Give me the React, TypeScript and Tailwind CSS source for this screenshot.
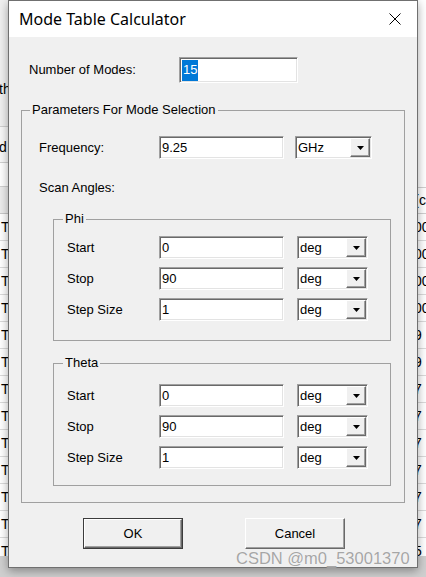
import type { ReactNode } from "react";

const UI = "font-['Liberation_Sans',Arial,sans-serif]";

function Sunken({ className = "", children }: { className?: string; children?: ReactNode }) {
  return (
    <div
      className={`flex items-center bg-white border border-t-[#a0a0a0] border-l-[#a0a0a0] border-r-white border-b-white shadow-[inset_1px_1px_0_#696969,inset_-1px_-1px_0_#e3e3e3] ${className}`}
    >
      {children}
    </div>
  );
}

function TextBox({ value, className = "" }: { value: string; className?: string }) {
  return (
    <Sunken className={`h-[23px] ${className}`}>
      <span className="pl-[2px] leading-none">{value}</span>
    </Sunken>
  );
}

function Combo({ value, className = "" }: { value: string; className?: string }) {
  return (
    <Sunken className={`h-[23px] ${className}`}>
      <span className="flex-1 pl-[2px] leading-none">{value}</span>
      <div className="mr-[1px] w-[20px] h-[19px] flex items-center justify-center bg-[#f0f0f0] border border-t-white border-l-white border-r-[#696969] border-b-[#696969] shadow-[inset_-1px_-1px_0_#a0a0a0]">
        <svg width="7" height="4" viewBox="0 0 7 4" aria-hidden="true">
          <path d="M0 0h7L3.5 4z" fill="#000" />
        </svg>
      </div>
    </Sunken>
  );
}

function AngleRow({ label, value }: { label: string; value: string }) {
  return (
    <div className="flex items-center">
      <span className="w-[92px]">{label}</span>
      <TextBox value={value} className="w-[125px]" />
      <Combo value="deg" className="ml-[13px] w-[71px]" />
    </div>
  );
}

const ROWS: [string, string][] = [
  ["Start", "0"],
  ["Stop", "90"],
  ["Step Size", "1"],
];

function AngleGroup({ title, top, inner }: { title: string; top: string; inner: string }) {
  return (
    <fieldset className={`ml-[31px] w-[338px] border border-[#a0a0a0] ${top}`}>
      <legend className="ml-[9px] px-[2px] leading-[16px]">{title}</legend>
      <div className={`flex flex-col gap-[8px] pl-[13px] ${inner}`}>
        {ROWS.map(([l, v]) => (
          <AngleRow key={l} label={l} value={v} />
        ))}
      </div>
    </fieldset>
  );
}

const RIGHT_VALUES = ["00", "00", "00", "00", "9", "9", "7", "7", "7", "7", "7", "7", "5"];

function Background() {
  return (
    <div className={`h-[577px] flex flex-col bg-[#f0f0f0] ${UI} text-[14px] text-black`}>
      <div className="h-[214px] flex">
        <div className="w-[416px] flex flex-col">
          <div className="h-[80px]" />
          <div className="h-[18px] leading-[18px] -ml-[1px]">th</div>
          <div className="h-[29px] border-b border-[#d0d0d0]" />
          <div className="h-[36px] pt-[3px] leading-[34px] bg-[#f8f8f8] border-b border-[#d0d0d0] -ml-[1px]">
            d
          </div>
          <div className="h-[24px] bg-white border-b border-[#d0d0d0]" />
          <div className="flex-1 bg-[#ececec] border-b border-[#c8c8c8]" />
        </div>
        <div className="flex-1 flex flex-col bg-white">
          <div className="h-[188px]" />
          <div className="flex-1 bg-white border-t border-b border-[#d0d0d0] leading-[25px] pl-[1px]">(c</div>
        </div>
      </div>
      <div className="h-[342px] flex flex-col overflow-hidden bg-white">
        {RIGHT_VALUES.map((v, i) => (
          <div key={i} className="h-[27px] shrink-0 flex border-b border-[#dadada] leading-[26px]">
            <div className="w-[416px] pl-[1px]">T</div>
            <div className="w-[10px] -ml-[2px] whitespace-nowrap">{v}</div>
          </div>
        ))}
      </div>
      <div className="flex-1 bg-[#cfcfcf]" />
    </div>
  );
}

export default function App() {
  return (
    <div className="relative w-[426px] h-[577px] overflow-hidden">
      <Background />

      <div className="absolute left-[8px] top-0 w-[410px] h-[568px] flex flex-col border border-[#707070] bg-[#f0f0f0] shadow-[0_3px_9px_rgba(0,0,0,0.35)]">
        <div className="h-[36px] shrink-0 bg-white flex items-center justify-between pl-[10px] pr-[16px]">
          <span className="font-['Noto_Sans',sans-serif] text-[16px] text-black">Mode Table Calculator</span>
          <svg width="12" height="12" viewBox="0 0 12 12" aria-hidden="true">
            <path d="M0.5 0.5L11.5 11.5M11.5 0.5L0.5 11.5" stroke="#000" strokeWidth="1" />
          </svg>
        </div>

        <div className={`flex-1 flex flex-col px-[12px] pt-[20px] ${UI} text-[13px] text-black`}>
          <div className="flex items-center">
            <span className="w-[158px] pl-[8px]">Number of Modes:</span>
            <Sunken className="w-[119px] h-[26px]">
              <span className="ml-[2px] h-[21px] flex items-center bg-[#0078d7] text-white px-[1px]">15</span>
            </Sunken>
          </div>

          <fieldset className="mt-[19px] w-[384px] border border-[#a0a0a0]">
            <legend className="ml-[8px] px-[2px] leading-[16px]">Parameters For Mode Selection</legend>
            <div className="flex flex-col pt-[18px] pb-[16px]">
              <div className="flex items-center pl-[17px]">
                <span className="w-[120px]">Frequency:</span>
                <TextBox value="9.25" className="w-[125px]" />
                <Combo value="GHz" className="ml-[11px] w-[77px]" />
              </div>
              <div className="mt-[21px] pl-[17px] leading-[16px]">Scan Angles:</div>
              <AngleGroup title="Phi" top="mt-[15px]" inner="pt-[9px] pb-[19px]" />
              <AngleGroup title="Theta" top="mt-[14px]" inner="pt-[13px] pb-[16px]" />
            </div>
          </fieldset>

          <div className="mt-[15px] flex pl-[62px] gap-[62px]">
            <div className="w-[100px] h-[31px] border border-[#3c3c3c]">
              <div className="h-full flex items-center justify-center bg-[#f0f0f0] border border-t-white border-l-white border-r-[#696969] border-b-[#696969] shadow-[inset_-1px_-1px_0_#a0a0a0]">
                OK
              </div>
            </div>
            <div className="w-[100px] h-[31px] flex items-center justify-center bg-[#f0f0f0] border border-t-white border-l-white border-r-[#696969] border-b-[#696969] shadow-[inset_-1px_-1px_0_#a0a0a0]">
              Cancel
            </div>
          </div>
        </div>
      </div>

      <div
        className={`absolute left-[236px] top-[547px] ${UI} text-[16.5px] leading-[22px] text-[#a6a6a6] [text-shadow:0_0_1px_#ffffff]`}
      >
        CSDN @m0_53001370
      </div>
    </div>
  );
}
